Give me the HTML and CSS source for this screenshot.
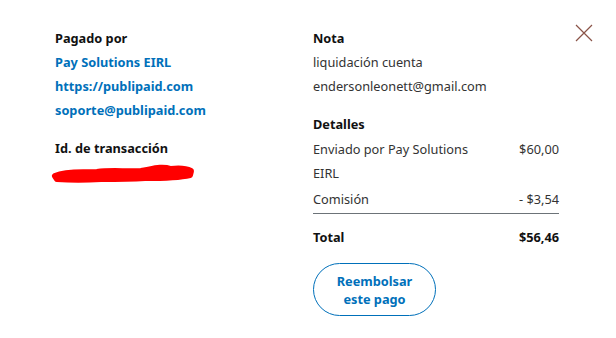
FILE: index.html
```html
<!DOCTYPE html>
<html lang="es">
<head>
<meta charset="utf-8">
<link rel="stylesheet" href="styles.css">
</head>
<body>
<div class="modal">
  <div class="cols">
    <div class="col left">
      <div class="label">Pagado por</div>
      <div class="link">Pay Solutions EIRL</div>
      <div class="link">https://publipaid.com</div>
      <div class="link">soporte@publipaid.com</div>
      <div class="label gap">Id. de transacción</div>
      <div class="redact">
        <svg width="150" height="24" viewBox="0 0 150 24"><path d="M6 16 C18 11 32 13 48 12 C62 10 78 12 92 11 C104 9 112 6 122 9 C130 8 138 9 142 11 L141 15 C128 18 112 18 96 18 C80 19 66 19 52 19 C36 20 22 20 8 19 Z" fill="#ff0000" stroke="#ff0000" stroke-width="6" stroke-linejoin="round"/></svg>
      </div>
    </div>
    <div class="col right">
      <div class="label">Nota</div>
      <div class="text">liquidación cuenta</div>
      <div class="text">endersonleonett@gmail.com</div>
      <div class="label gap">Detalles</div>
      <div class="row first"><span class="text">Enviado por Pay Solutions<br>EIRL</span><span class="text amt">$60,00</span></div>
      <div class="row sep"><span class="text">Comisión</span><span class="text amt">- $3,54</span></div>
      <div class="row total"><span class="label">Total</span><span class="label">$56,46</span></div>
      <button class="btn">Reembolsar<br>este pago</button>
    </div>
  </div>
  <button class="close" aria-label="Cerrar">
    <svg width="18" height="18" viewBox="0 0 18 18"><path d="M1 1 L17 17 M17 1 L1 17" stroke="#8a5448" stroke-width="1.2" fill="none"/></svg>
  </button>
</div>
</body>
</html>
```
FILE: styles.css
```css
* { box-sizing: border-box; }
body { margin: 0; background: #fff; font-family: "Noto Sans", "Open Sans", sans-serif; font-size: 12.75px; color: #2c2e2f; }
.modal { position: relative; width: 616px; height: 338px; padding: 26px 0 0 55px; }
.cols { display: grid; grid-template-columns: 258px 246px; }
.col { display: flex; flex-direction: column; }
.label { font-weight: 700; line-height: 24px; color: #111; }
.link { font-weight: 700; line-height: 24px; color: #0070ba; }
.text { line-height: 24px; color: #333; }
.gap { margin-top: 14px; }
.redact { height: 24px; margin-left: -6px; }
.row { display: flex; justify-content: space-between; align-items: flex-start; }
.first { margin-top: 1px; }
.amt { text-align: right; }
.sep { margin-top: 2px; border-bottom: 1px solid #6c7378; padding-bottom: 2px; }
.total { margin-top: 11px; }
.btn { margin-top: 14px; width: 123px; height: 53px; border: 1px solid #0070ba; border-radius: 27px; background: #fff; color: #0070ba; font: 700 12.75px/18px "Noto Sans", "Open Sans", sans-serif; padding: 0; }
.close { position: absolute; top: 24px; left: 575px; border: 0; background: none; padding: 0; width: 18px; height: 18px; }
.close svg { display: block; }
```
